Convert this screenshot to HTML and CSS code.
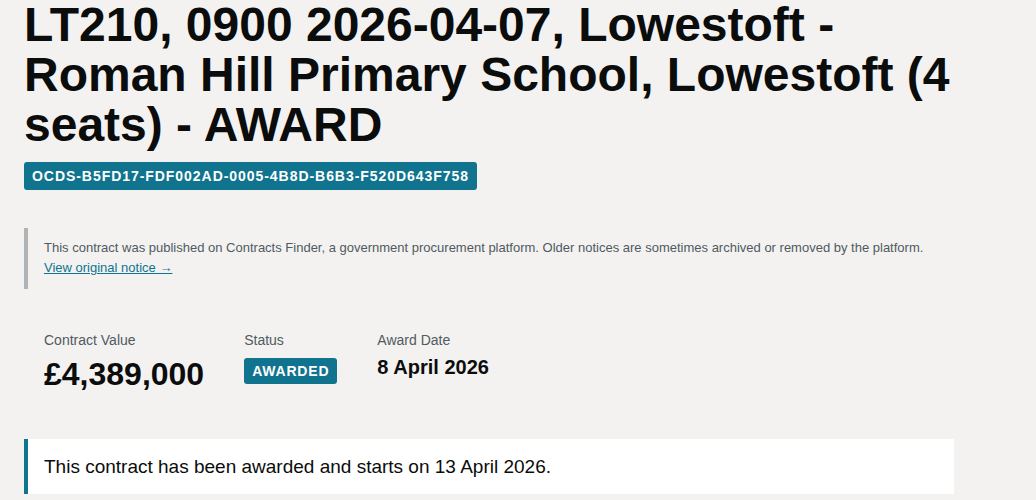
FILE: index.html
```html
<!DOCTYPE html>
<html lang="en">
<head>
<meta charset="utf-8">
<title>LT210 - AWARD</title>
<link rel="stylesheet" href="styles.css">
</head>
<body>
<main class="page">
  <h1 class="title">LT210, 0900 2026-04-07, Lowestoft - Roman Hill Primary School, Lowestoft (4 seats) - AWARD</h1>
  <span class="ocid">OCDS-B5FD17-FDF002AD-0005-4B8D-B6B3-F520D643F758</span>

  <div class="notice">
    <p class="notice-text">This contract was published on Contracts Finder, a government procurement platform. Older notices are sometimes archived or removed by the platform.</p>
    <a class="notice-link" href="#">View original notice →</a>
  </div>

  <div class="stats">
    <div class="stat">
      <div class="stat-label">Contract Value</div>
      <div class="stat-value big">£4,389,000</div>
    </div>
    <div class="stat">
      <div class="stat-label">Status</div>
      <span class="status-badge">AWARDED</span>
    </div>
    <div class="stat">
      <div class="stat-label">Award Date</div>
      <div class="stat-value">8 April 2026</div>
    </div>
  </div>

  <div class="callout">This contract has been awarded and starts on 13 April 2026.</div>
</main>
</body>
</html>
```

FILE: styles.css
```css
html, body {
  margin: 0;
  padding: 0;
  background: #f3f2f1;
  color: #0b0c0c;
  font-family: "Liberation Sans", Arial, sans-serif;
}

.page {
  width: 930px;
  padding: 0 24px;
}

.title {
  margin: 0 0 12px;
  font-size: 48px;
  line-height: 50px;
  font-weight: 700;
}

.ocid {
  display: inline-block;
  background: #10748f;
  color: #fff;
  font-size: 14px;
  font-weight: 700;
  letter-spacing: 0.95px;
  line-height: 28px;
  padding: 0 8px;
  border-radius: 3px;
}

.notice {
  margin-top: 38px;
  border-left: 4px solid #b1b4b6;
  padding: 10px 16px 11px;
}

.notice-text {
  margin: 0;
  font-size: 13px;
  line-height: 20px;
  color: #505a5f;
}

.notice-link {
  font-size: 13px;
  line-height: 20px;
  color: #10748f;
  text-decoration: underline;
}

.stats {
  display: flex;
  gap: 40px;
  margin-top: 41px;
  padding-left: 20px;
}

.stat-label {
  font-size: 14px;
  line-height: 20px;
  color: #505a5f;
  margin-bottom: 5px;
}

.stat-value {
  font-size: 20px;
  line-height: 24px;
  font-weight: 700;
}

.stat-value.big {
  font-size: 32px;
  line-height: 38px;
}

.status-badge {
  display: inline-block;
  margin-top: 3px;
  background: #10748f;
  color: #fff;
  font-size: 14px;
  font-weight: 700;
  letter-spacing: 0.8px;
  line-height: 26px;
  padding: 0 8px;
  border-radius: 3px;
}

.callout {
  margin-top: 46px;
  background: #fff;
  border-left: 4px solid #10748f;
  padding: 15px 16px;
  font-size: 19px;
  line-height: 25px;
}
```
